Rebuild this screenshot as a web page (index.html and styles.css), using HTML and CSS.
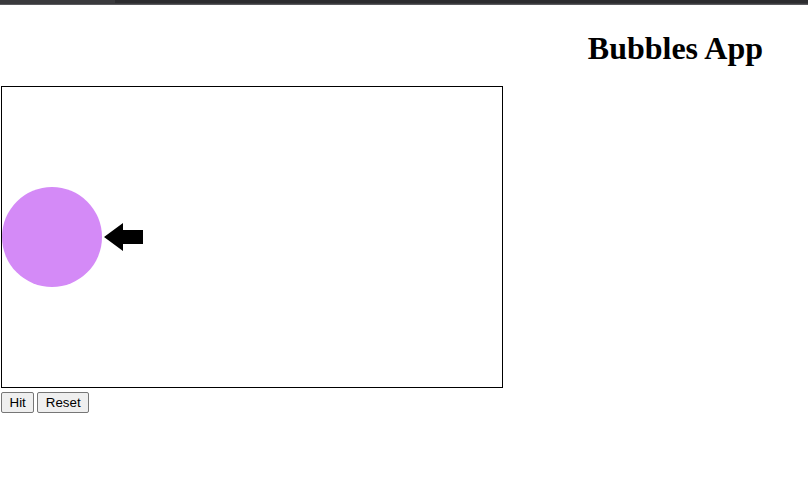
FILE: index.html
```html
<!DOCTYPE html>
<html lang="en">
<head>
<meta charset="utf-8">
<title>Bubbles App</title>
<link rel="stylesheet" href="styles.css">
</head>
<body>
<div class="topbar"><div class="tab"></div></div>
<header class="header">
  <h1 class="title">Bubbles App</h1>
</header>
<main class="stage">
  <div class="board">
    <svg class="scene" width="500" height="300" viewBox="0 0 500 300" xmlns="http://www.w3.org/2000/svg">
      <circle cx="50" cy="150" r="50" fill="#d48af7"/>
      <polygon points="102,150 121,136 121,143 141,143 141,157 121,157 121,164" fill="#000"/>
    </svg>
  </div>
  <div class="controls">
    <button class="btn" type="button">Hit</button>
    <button class="btn" type="button">Reset</button>
  </div>
</main>
</body>
</html>
```

FILE: styles.css
```css
html, body {
  margin: 0;
  padding: 0;
  background: #ffffff;
}

body {
  font-family: "Liberation Serif", "Times New Roman", serif;
  width: 808px;
  height: 488px;
  overflow: hidden;
}

.topbar {
  height: 5px;
  background: #3a3a3d;
  border-bottom: 1px solid #5a5a5e;
  box-sizing: border-box;
  display: flex;
  justify-content: flex-end;
}

.tab {
  width: 693px;
  height: 3px;
  background: #2c2c2f;
}

.header {
  display: flex;
  justify-content: flex-end;
  padding-right: 45px;
}

.title {
  margin: 25px 0 19px;
  font-size: 32px;
  font-weight: bold;
  line-height: 37px;
  color: #000;
}

.stage {
  display: flex;
  flex-direction: column;
  align-items: flex-start;
  gap: 4px;
  padding-left: 1px;
}

.board {
  border: 1px solid #000;
  width: 500px;
  height: 300px;
}

.scene {
  display: block;
}

.controls {
  display: flex;
  gap: 3px;
}

.btn {
  font-family: "Liberation Sans", Arial, sans-serif;
  font-size: 13.33px;
  height: 21px;
  padding: 1px 7.5px;
  background: #efefef;
  border: 1px solid #767676;
  border-radius: 2px;
  color: #000;
}
```
